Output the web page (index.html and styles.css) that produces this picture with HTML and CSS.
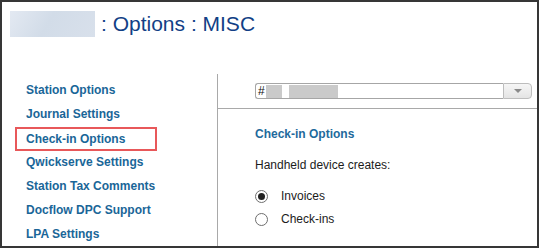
FILE: index.html
```html
<!DOCTYPE html>
<html>
<head>
<meta charset="utf-8">
<link rel="stylesheet" href="styles.css">
</head>
<body>
<div class="frame">
  <div class="header">
    <span class="blur-name"></span>
    <h1 class="title">: Options : MISC</h1>
  </div>
  <div class="main">
    <nav class="nav">
      <a class="nav-item">Station Options</a>
      <a class="nav-item">Journal Settings</a>
      <a class="nav-item nav-item--active">Check-in Options</a>
      <a class="nav-item">Qwickserve Settings</a>
      <a class="nav-item">Station Tax Comments</a>
      <a class="nav-item">Docflow DPC Support</a>
      <a class="nav-item">LPA Settings</a>
    </nav>
    <section class="panel">
      <div class="panel-top">
        <div class="combo">
          <div class="combo-field">
            <span class="combo-hash">#</span>
            <span class="blur blur-a"></span>
            <span class="blur blur-b"></span>
          </div>
          <div class="combo-btn"><span class="caret"></span></div>
        </div>
      </div>
      <div class="panel-body">
        <h2 class="section-title">Check-in Options</h2>
        <p class="label">Handheld device creates:</p>
        <label class="radio-row"><span class="radio radio--on"></span>Invoices</label>
        <label class="radio-row radio-row--second"><span class="radio"></span>Check-ins</label>
      </div>
    </section>
  </div>
</div>
</body>
</html>
```
FILE: styles.css
```css
* { box-sizing: border-box; }
html, body { margin: 0; padding: 0; background: #fff; }
body { font-family: "Liberation Sans", Arial, sans-serif; }

.frame {
  width: 539px;
  height: 248px;
  border: 2px solid #363636;
  display: flex;
  flex-direction: column;
  overflow: hidden;
}

.header {
  display: flex;
  align-items: flex-start;
  padding: 9px 0 0 8px;
  height: 72px;
  flex-shrink: 0;
}
.blur-name {
  width: 85px;
  height: 26px;
  background: linear-gradient(120deg, #e3e9f2 0%, #d2dce8 45%, #d8e0eb 100%);
}
.title {
  margin: 0 0 0 6px;
  font-weight: normal;
  font-size: 21px;
  line-height: 26px;
  color: #123f86;
}

.main {
  flex: 1;
  display: flex;
}

.nav {
  width: 216px;
  border-right: 1px solid #a9a9a9;
  padding-top: 4px;
  display: flex;
  flex-direction: column;
}
.nav-item {
  display: block;
  height: 24px;
  line-height: 24px;
  padding-left: 24px;
  font-size: 12px;
  font-weight: bold;
  color: #1a6698;
  white-space: nowrap;
}
.nav-item--active {
  margin-left: 13px;
  width: 142px;
  padding-left: 9px;
  line-height: 20px;
  border: 2px solid #e8585a;
  position: relative;
  top: 1px;
}

.panel {
  flex: 1;
  display: flex;
  flex-direction: column;
}
.panel-top {
  height: 35px;
  border-bottom: 1px solid #a9a9a9;
  padding: 9px 5px 0 37px;
}
.combo {
  display: flex;
  height: 16px;
}
.combo-field {
  flex: 1;
  border: 1px solid #a6a6a6;
  border-right: none;
  border-radius: 3px 0 0 3px;
  display: flex;
  align-items: center;
  padding-left: 2px;
  font-size: 12px;
  color: #111;
}
.combo-hash { line-height: 14px; }
.blur {
  height: 13px;
  background: #cacaca;
}
.blur-a { width: 16px; margin-left: 1px; }
.blur-b { width: 49px; margin-left: 7px; }
.combo-btn {
  width: 29px;
  border: 1px solid #bdbdbd;
  border-radius: 0 4px 4px 0;
  background: linear-gradient(#f6f6f6, #e4e4e4);
  display: flex;
  align-items: center;
  justify-content: center;
}
.caret {
  width: 0;
  height: 0;
  border-left: 4px solid transparent;
  border-right: 4px solid transparent;
  border-top: 4px solid #8a8a8a;
}

.panel-body {
  padding-left: 37px;
}
.section-title {
  margin: 17px 0 0;
  font-size: 12px;
  line-height: 16px;
  font-weight: bold;
  color: #1f6a9c;
}
.label {
  margin: 15px 0 0;
  font-size: 12px;
  line-height: 16px;
  color: #1c1c1c;
}
.radio-row {
  display: flex;
  align-items: center;
  height: 20px;
  margin-top: 13px;
  font-size: 12px;
  color: #1c1c1c;
}
.radio-row--second { margin-top: 3px; }
.radio {
  width: 13px;
  height: 13px;
  border: 1px solid #6e6e6e;
  border-radius: 50%;
  margin-right: 13px;
  display: flex;
  align-items: center;
  justify-content: center;
  background: #fff;
}
.radio--on::after {
  content: "";
  width: 7px;
  height: 7px;
  border-radius: 50%;
  background: #222;
}
```
